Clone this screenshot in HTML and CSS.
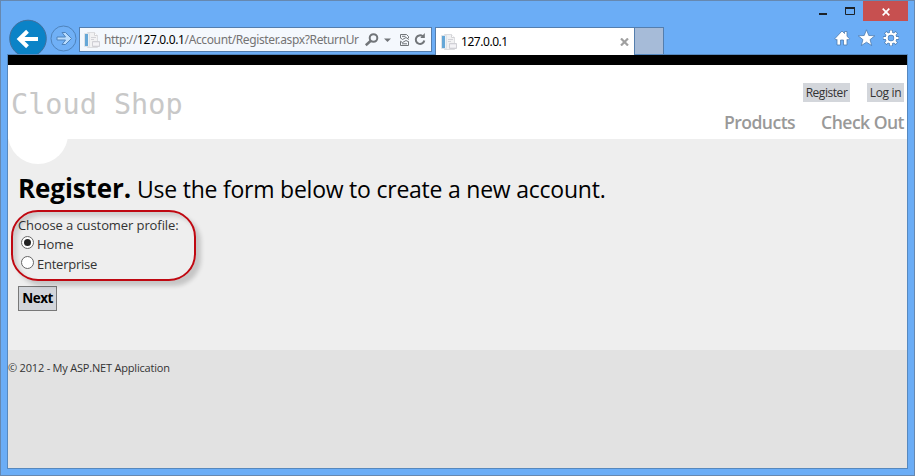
FILE: index.html
```html
<!DOCTYPE html>
<html lang="en">
<head>
<meta charset="utf-8">
<title>Register</title>
<link rel="stylesheet" href="styles.css">
</head>
<body>
<svg class="defs" width="0" height="0" aria-hidden="true">
  <symbol id="page-icon" viewBox="0 0 16 16">
    <path d="M3.500 .5h7l3 3v12h-10z" fill="#f2f2f3" stroke="#dcdde0"/>
    <path d="M10.500 .5v3h3" fill="#fff" stroke="#d4d4d7"/>
    <path d="M.5 1.500h5v13h-5z" fill="#eef1f4" stroke="#dde3e8"/>
    <path d="M1 2h3v12H1z" fill="#65a7d7"/>
    <path d="M7 5.500h5M7 7.500h3" stroke="#d3d3d8"/>
    <path d="M8.500 9.500h7v5h-7z" fill="#e9e8ed" stroke="#d0d0d5"/>
    <path d="M9 12h6" stroke="#fff"/>
  </symbol>
</svg>
<div class="window">
  <header class="chrome">
    <div class="toolbar">
      <svg class="back" width="38" height="35" viewBox="0 0 38 35">
        <circle cx="19" cy="19.500" r="18.300" fill="#0b83c7" stroke="#426f9c"/>
        <path d="M10.500 20H29M18.500 12.200L10.500 20l8 7.800" fill="none" stroke="#fff" stroke-width="4"/>
      </svg>
      <svg class="forward" width="27" height="27" viewBox="0 0 27 27">
        <circle cx="13.500" cy="13.500" r="12.500" fill="#70b0f6" stroke="#4f83bb"/>
        <path d="M7 12h8.500L12 7.500h3.500l6 6-6 6H12l3.500-4.500H7z" fill="#b9dcfd" stroke="#4f83bb"/>
      </svg>
      <div class="address">
        <svg width="16" height="16"><use href="#page-icon"/></svg>
        <span class="url">http://<b>127.0.0.1</b>/Account/Register.aspx?ReturnUr</span>
        <svg class="address-tools" width="64" height="16" viewBox="0 0 64 16" fill="none" stroke="#717579">
          <circle cx="9.500" cy="6" r="3.800" stroke-width="2"/>
          <path d="M6.800 8.800L1.800 13.200" stroke-width="2.500"/>
          <path d="M20 6.500h7l-3.500 3.500z" fill="#717579" stroke="none"/>
          <path d="M36.500 6V2.500h6l2 2V6M36.500 10v3.500h8V10"/>
          <path d="M36 5.500l2.500 2 3.500-2 3 2M36 9l2.500 1.500 3.500-2 3 1.500M38 11.800h5M38 4.300h3.500"/>
          <path d="M58.800 4.300A4.300 4.300 0 1 0 60.300 8.500" stroke-width="2"/>
          <path d="M56.300 6h4.500V1z" fill="#717579" stroke="none"/>
        </svg>
      </div>
      <div class="tab">
        <svg width="16" height="16"><use href="#page-icon"/></svg>
        <span class="tab-title">127.0.0.1</span>
        <svg class="tab-close" width="9" height="8" viewBox="0 0 9 8"><path d="M1 .5l7 7M8 .5l-7 7" stroke="#a0a0a0" stroke-width="2.200"/></svg>
      </div>
      <div class="new-tab"></div>
    </div>
    <div class="controls">
      <div class="captions">
        <svg width="56" height="21" viewBox="0 0 56 21"><path d="M12 14h8" stroke="#1c2229" stroke-width="2"/><path d="M38.500 7.500h9v7h-9z" fill="none" stroke="#1c2229"/><path d="M38 8h10" stroke="#1c2229" stroke-width="2"/></svg>
        <div class="close"><svg width="8" height="8" viewBox="0 0 8 8"><path d="M.7.700l6.600 6.600M7.300.7L.7 7.300" stroke="#fff" stroke-width="1.700"/></svg></div>
      </div>
      <svg class="commands" width="66" height="18" viewBox="0 0 66 18" fill="#fff" stroke="#4c7bb0" stroke-width=".8">
        <path d="M1 9.500L8 2l2.500 2.500V2.500H13v4.800l2.500 2.400-1.500 1.500-1-.9V16H9.500v-5h-3v5H3v-5.700l-1 .9z"/>
        <path d="M32.500 .8l2.300 5.700 6 .3-4.700 3.800 1.600 6-5.200-3.400-5.200 3.400 1.600-6-4.700-3.800 6-.3z"/>
        <g fill="none" stroke="#4c7bb0"><circle cx="57" cy="9" r="4.300" stroke-width="3.400"/><path stroke-width="3.400" d="M57 1v3M57 14v3M49 9h3M62 9h3M51.300 3.300l2.200 2.200M60.500 12.500l2.200 2.200M62.700 3.300l-2.200 2.200M53.500 12.500l-2.200 2.200"/></g>
        <g fill="none" stroke="#fff"><circle cx="57" cy="9" r="4.300" stroke-width="2.200"/><path stroke-width="2.200" d="M57 1.500V5M57 13v3.500M49.500 9H53M61 9h3.500M51.700 3.700l2.200 2.200M60.100 12.100l2.200 2.200M62.300 3.700l-2.200 2.200M53.900 12.100l-2.200 2.200"/></g>
      </svg>
    </div>
  </header>
  <div class="page">
    <div class="site-header">
      <div class="brand">Cloud Shop</div>
      <div class="site-nav">
        <div class="login"><a class="register">Register</a><a class="log-in">Log in</a></div>
        <nav class="menu"><a class="products">Products</a><a class="checkout">Check Out</a></nav>
      </div>
    </div>
    <main class="main">
      <div class="orb"></div>
      <h1><strong>Register.</strong><span>Use the form below to create a new account.</span></h1>
      <div class="profile">
        <p>Choose a customer profile:</p>
        <div class="option"><i class="radio checked"></i><span class="home">Home</span></div>
        <div class="option"><i class="radio"></i><span class="enterprise">Enterprise</span></div>
        <div class="highlight"></div>
      </div>
      <button class="next">Next</button>
    </main>
    <footer class="footer"><span>© 2012 - My ASP.NET Application</span></footer>
  </div>
</div>
</body>
</html>
```
FILE: styles.css
```css
* { box-sizing: border-box; }
body { margin: 0; overflow: hidden; font-family: "Open Sans", "Noto Sans", sans-serif; }
svg { display: block; flex: none; }
.defs { position: absolute; }
.window { width: 915px; height: 476px; padding: 0 6px 6px; border: 1px solid #6688b0; background: #6badf6; }
.chrome { height: 53px; display: flex; justify-content: space-between; }
.toolbar { display: flex; align-items: flex-start; padding-left: 2px; }
.back { margin-top: 18px; overflow: hidden; }
.forward { margin: 24px 2px 0 3px; }
.address { width: 353px; height: 25px; margin-top: 26px; border: 1px solid #547eae; background: #f4f8fd; display: flex; align-items: center; padding-left: 4px; }
.url { width: 257px; margin-left: 4px; font: 12px/20px "Noto Sans", sans-serif; letter-spacing: -.37px; color: #747474; white-space: nowrap; }
.url b { font-weight: 400; color: #000; }
.address-tools { margin-left: 3px; }
.tab { width: 200px; height: 28px; margin: 26px 0 0 3px; border: 1px solid #547eae; border-bottom: 0; background: #fff; display: flex; align-items: center; padding-left: 5px; }
.tab-title { width: 160px; margin-left: 4px; font: 12px/20px "Noto Sans", sans-serif; letter-spacing: -.45px; }
.tab-close { margin-left: -1px; }
.new-tab { width: 29px; height: 27px; margin-top: 26px; border: 1px solid #547eae; border-left: 0; border-bottom: 0; background: #a6bbd8; }
.controls { width: 101px; }
.captions { display: flex; height: 20px; }
.captions svg { margin-top: -1px; }
.close { width: 45px; background: #c75050; display: flex; align-items: center; justify-content: center; }
.captions .close svg { margin-top: 2px; }
.commands { margin: 8px 0 0 27px; }
.page { width: 901px; height: 415px; border: 1px solid #5688be; background: #e2e2e2; }
.site-header { height: 84px; border-top: 10px solid #000; background: #fff; display: flex; justify-content: space-between; }
.brand { margin: 22px 0 0 3px; font: 28.500px/36px "DejaVu Sans Mono", monospace; color: #c8c8c8; white-space: nowrap; }
.site-nav { padding: 18px 3px 0 0; }
.login { display: flex; justify-content: flex-end; gap: 17px; font-size: 12px; line-height: 19px; color: #333; }
.login a { height: 19px; text-align: center; background: #d3d6db; white-space: nowrap; }
.register { width: 47px; letter-spacing: -.45px; }
.log-in { width: 37px; letter-spacing: -.35px; }
.menu { display: flex; justify-content: flex-end; gap: 26px; margin-top: 8px; font: 600 17.600px/24px "Open Sans", sans-serif; letter-spacing: -.55px; color: #999; white-space: nowrap; }
.main { height: 211px; background: #eee; padding: 0 10px; position: relative; }
.orb { position: absolute; left: 0; top: 0; width: 60px; height: 25px; overflow: hidden; }
.orb::before { content: ""; display: block; width: 60px; height: 60px; margin-top: -35px; border-radius: 50%; background: #fff; }
h1 { position: relative; margin: 0; padding-top: 31px; height: 76px; font-size: 23px; line-height: 36px; font-weight: 400; letter-spacing: -.23px; white-space: nowrap; display: flex; align-items: baseline; color: #000; }
h1 strong { font-size: 26px; width: 119px; letter-spacing: -.1px; }
.profile { position: relative; height: 71px; font-size: 13px; line-height: 20px; letter-spacing: -.09px; color: #333; white-space: nowrap; }
.profile p { margin: 0; height: 19px; }
.option { display: flex; height: 20px; align-items: center; padding-left: 3px; }
.enterprise { letter-spacing: -.25px; }
.radio { width: 13px; height: 13px; border: 1px solid #666; border-radius: 50%; background: #fff; margin: -3px 3px 0 0; display: flex; }
.radio.checked::after { content: ""; width: 7px; height: 7px; margin: 2px; border-radius: 50%; background: #222; }
.highlight { position: absolute; left: -7px; top: -5px; width: 185px; height: 71px; border: 2px solid #bf0811; border-radius: 27px; box-shadow: 5px 5px 4px rgba(0,0,0,.17), inset 4px 4px 4px rgba(0,0,0,.14); }
.next { display: block; width: 39px; height: 25px; margin: 0; padding: 0 0 1px; border: 1px solid #787878; border-radius: 0; background: #d3d6db; font: 700 13.500px/20px "Open Sans", sans-serif; color: #000; letter-spacing: -.5px; }
.footer { padding-top: 9px; font-size: 11px; line-height: 18px; letter-spacing: -.2px; color: #333; }
```
